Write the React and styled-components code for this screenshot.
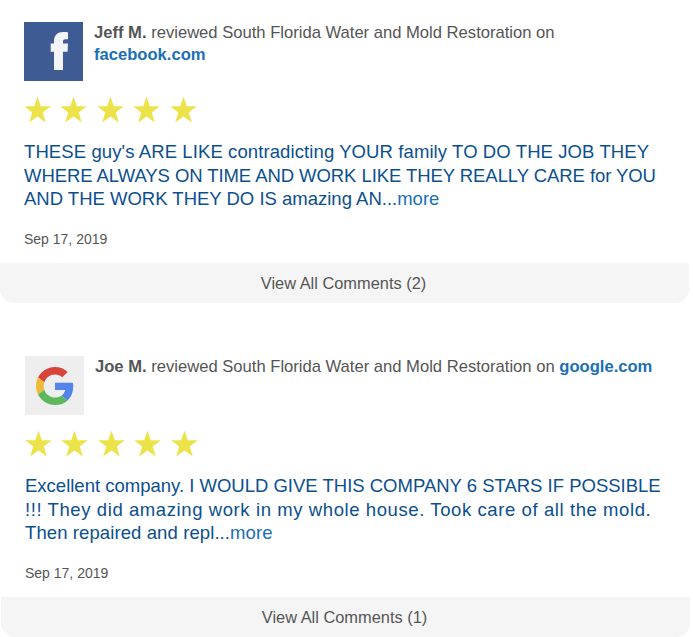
import React from 'react';
import styled, { createGlobalStyle } from 'styled-components';

const GlobalStyle = createGlobalStyle`
  html, body {
    margin: 0;
    padding: 0;
    background: #fff;
    font-family: "Liberation Sans", Arial, sans-serif;
  }
`;

const Page = styled.div`
  width: 693px;
  height: 637px;
  overflow: hidden;
`;

const Card = styled.div`
  width: 689px;
  margin-left: ${(p) => p.$indent}px;
  margin-bottom: 31px;
`;

const Body = styled.div`
  padding: 22px 24px 0;
  height: 263px;
  box-sizing: border-box;
`;

const Head = styled.div`
  display: flex;
  gap: 11px;
`;

const Avatar = styled.div`
  width: 59px;
  height: 59px;
  flex: none;
  display: flex;
  align-items: center;
  justify-content: center;
  background: ${(p) => p.$bg};
`;

const Byline = styled.div`
  font-size: 16.6px;
  line-height: 22px;
  color: #555;
`;

const Name = styled.b`
  font-weight: 700;
`;

const Source = styled.a`
  color: #1a6fb5;
  font-weight: 700;
`;

const Stars = styled.div`
  display: flex;
  gap: 9.4px;
  margin-top: 15px;
`;

const Text = styled.p`
  margin: 17px 0 0;
  font-size: 18.5px;
  line-height: 23.5px;
  color: #0b4f8f;
`;

const Line = styled.span`
  display: block;
  white-space: nowrap;
  letter-spacing: ${(p) => p.$track}px;
`;

const More = styled.span`
  color: #1a6fb5;
`;

const DateLine = styled.div`
  margin-top: 20px;
  font-size: 14px;
  line-height: 16px;
  color: #555;
`;

const Footer = styled.div`
  height: 40px;
  padding-right: 2px;
  box-sizing: border-box;
  display: flex;
  align-items: center;
  justify-content: center;
  background: #f5f5f5;
  border-radius: 0 0 14px 14px;
  font-size: 16.4px;
  color: #555;
`;

const Star = () => (
  <svg width="27" height="27" viewBox="0 0 27 27">
    <path
      d="M13.5 0.5l3.3 9.7h10l-8 6.2 3 10.1-8.3-6-8.3 6 3-10.1-8-6.2h10z"
      fill="#ece34a"
    />
  </svg>
);

const FacebookLogo = () => (
  <svg width="59" height="59" viewBox="0 0 59 59">
    <rect width="59" height="59" fill="#3f5b94" />
    <path
      d="M44 10.300c-1-.2-3-.3-4.800-.3-5.800 0-9.200 3.300-9.200 9.200v2.300h-3.300v8.200H30V48h9V29.700h4.600l.4-8.200h-5v-2c0-1.600.8-2.300 2.500-2.300H44z"
      fill="#f2f4f8"
    />
  </svg>
);

const GoogleLogo = () => (
  <svg width="38" height="38" viewBox="0 0 48 48">
    <path fill="#d8443a" d="M24 9.500c3.500 0 6.700 1.200 9.200 3.600l6.800-6.800C35.900 2.500 30.500 0 24 0 14.600 0 6.500 5.400 2.600 13.200l7.900 6.200C12.400 13.700 17.700 9.500 24 9.500z" />
    <path fill="#5185ec" d="M47 24.500c0-1.600-.1-3.100-.4-4.500H24v9h12.900c-.6 3-2.300 5.500-4.800 7.200l7.700 6c4.500-4.200 7.200-10.300 7.200-17.700z" />
    <path fill="#efb93a" d="M10.500 28.600c-.5-1.400-.8-3-.8-4.600s.3-3.200.8-4.600l-7.900-6.200C.9 16.500 0 20.100 0 24s.9 7.500 2.600 10.800z" />
    <path fill="#5cb85c" d="M24 48c6.500 0 11.900-2.100 15.800-5.800l-7.700-6c-2.100 1.400-4.900 2.300-8.100 2.300-6.300 0-11.600-4.200-13.500-9.900l-7.900 6.200C6.500 42.600 14.600 48 24 48z" />
  </svg>
);

const reviews = [
  {
    id: 1,
    indent: 0,
    name: 'Jeff M.',
    source: 'facebook.com',
    avatarBg: '#3f5b94',
    logo: <FacebookLogo />,
    lines: [
      { text: "THESE guy's ARE LIKE contradicting YOUR family TO DO THE JOB THEY", track: 0.1 },
      { text: 'WHERE ALWAYS ON TIME AND WORK LIKE THEY REALLY CARE for YOU', track: -0.07 },
      { text: 'AND THE WORK THEY DO IS amazing AN...', track: 0 },
    ],
    comments: 2,
  },
  {
    id: 2,
    indent: 1,
    name: 'Joe M.',
    source: 'google.com',
    avatarBg: '#eeeeee',
    logo: <GoogleLogo />,
    lines: [
      { text: 'Excellent company. I WOULD GIVE THIS COMPANY 6 STARS IF POSSIBLE', track: 0 },
      { text: '!!! They did amazing work in my whole house. Took care of all the mold.', track: 0.59 },
      { text: 'Then repaired and repl...', track: 0.1 },
    ],
    comments: 1,
  },
];

const App = () => {
  return (
    <Page>
      <GlobalStyle />
      {reviews.map((r) => (
        <Card key={r.id} $indent={r.indent}>
          <Body>
            <Head>
              <Avatar $bg={r.avatarBg}>{r.logo}</Avatar>
              <Byline>
                <Name>{r.name}</Name> reviewed South Florida Water and Mold Restoration on{' '}
                <Source>{r.source}</Source>
              </Byline>
            </Head>
            <Stars>
              {[1, 2, 3, 4, 5].map((n) => (
                <Star key={n} />
              ))}
            </Stars>
            <Text>
              {r.lines.map((l, i) => (
                <Line key={i} $track={l.track}>
                  {l.text}
                  {i === r.lines.length - 1 && <More>more</More>}
                </Line>
              ))}
            </Text>
            <DateLine>Sep 17, 2019</DateLine>
          </Body>
          <Footer>View All Comments ({r.comments})</Footer>
        </Card>
      ))}
    </Page>
  );
};

export default App;
